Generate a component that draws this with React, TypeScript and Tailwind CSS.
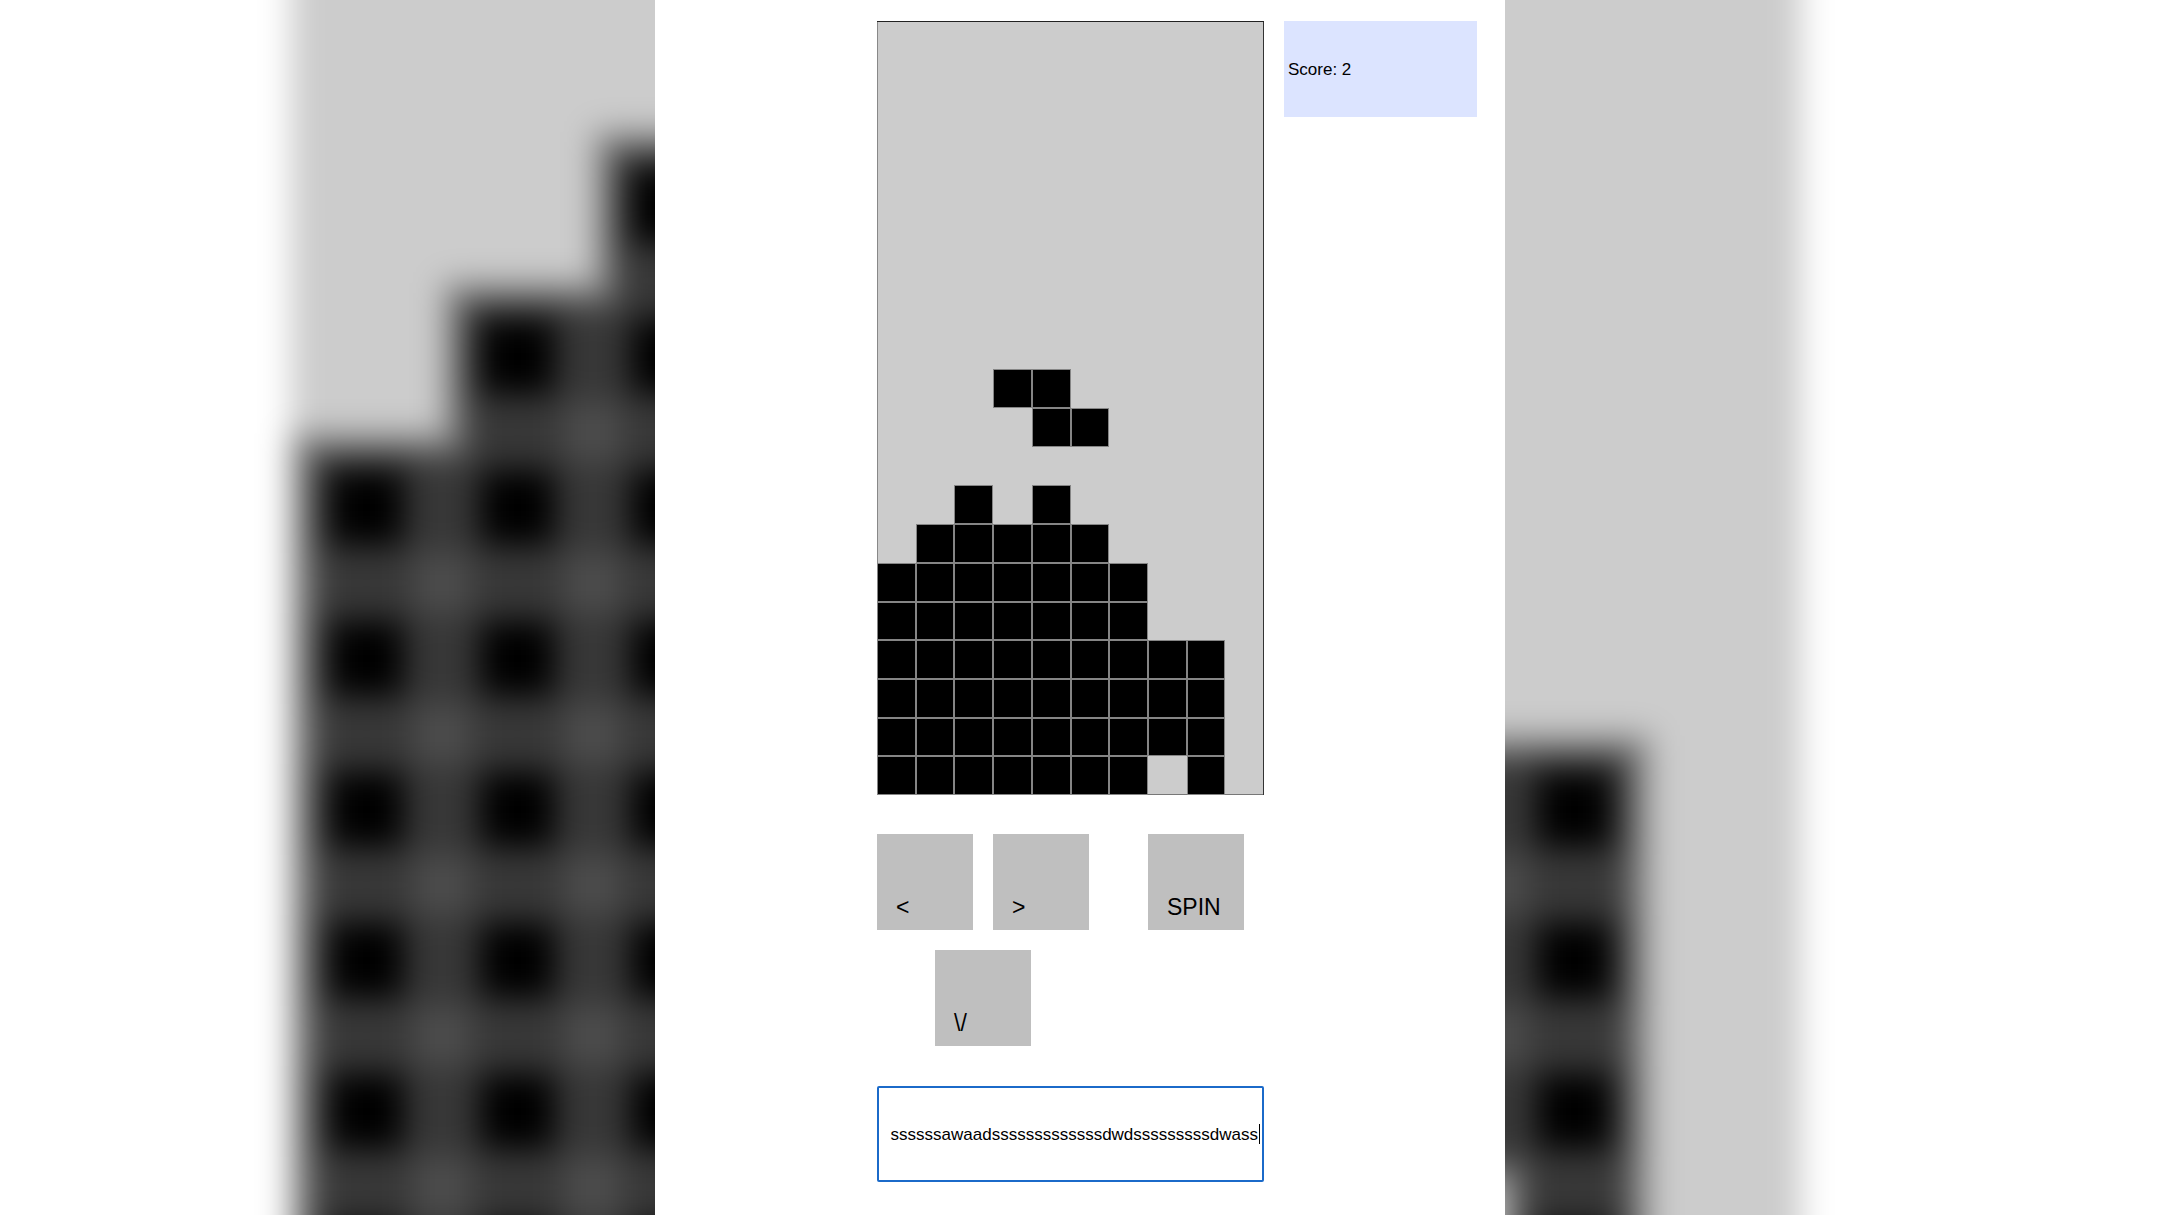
import { useState } from "react";

// "#" is a filled cell
const BOARD = [
  "..........",
  "..........",
  "..........",
  "..........",
  "..........",
  "..........",
  "..........",
  "..........",
  "..........",
  "...##.....",
  "....##....",
  "..........",
  "..#.#.....",
  ".#####....",
  "#######...",
  "#######...",
  "#########.",
  "#########.",
  "#########.",
  "#######.#.",
];

const CELLS = BOARD.flatMap((row, y) =>
  row.split("").map((cell, x) => ({ x, y, filled: cell === "#" }))
);
const FILLED = CELLS.filter((c) => c.filled);
const EMPTY = CELLS.filter((c) => !c.filled);

const BUTTON =
  "flex h-24 w-24 items-end bg-[#bfbfbf] pb-[11px] pl-[19px] text-[23px] leading-6 text-black";

// Enlarged, blurred copy of the board behind the game
function Backdrop() {
  return (
    <svg
      className="absolute inset-0 h-full w-full"
      viewBox="0 0 2160 1215"
      preserveAspectRatio="xMidYMid slice"
      aria-hidden="true"
    >
      <defs>
        <filter id="soft" filterUnits="userSpaceOnUse" x="0" y="-200" width="2160" height="1600">
          <feGaussianBlur stdDeviation="16" colorInterpolationFilters="sRGB" />
        </filter>
      </defs>
      <g filter="url(#soft)">
        <g transform="translate(291 -1682) scale(151)">
          {FILLED.map(({ x, y }) => (
            <g key={`${x}-${y}`}>
              <rect x={x} y={y} width="1" height="1" fill="#4c4c4c" />
              <rect x={x + 0.2} y={y} width="0.6" height="1" fill="#373737" />
              <rect x={x} y={y + 0.2} width="1" height="0.6" fill="#373737" />
              <rect x={x + 0.25} y={y + 0.25} width="0.5" height="0.5" fill="#000" />
            </g>
          ))}
          {/* lighter rim where the stack meets free space */}
          {EMPTY.map(({ x, y }) => (
            <rect key={`${x}-${y}`} x={x - 0.13} y={y - 0.13} width="1.26" height="1.26" fill="#858585" />
          ))}
          <rect y="14" width="0.13" height="6" fill="#808080" />
          {EMPTY.map(({ x, y }) => (
            <rect key={`${x}-${y}`} x={x} y={y} width="1.01" height="1.01" fill="#ccc" />
          ))}
          <rect x="-2" width="2" height="20" fill="#fff" />
          <rect x="10" width="2" height="20" fill="#fff" />
        </g>
      </g>
    </svg>
  );
}

function Board() {
  return (
    <div className="grid aspect-[1/2] w-full grid-cols-10 grid-rows-20 bg-[#ccc] shadow-[inset_0_1px_#222,inset_-1px_0_#333,inset_1px_0_#888,inset_0_-1px_#777]">
      {CELLS.map(({ x, y, filled }) => (
        <div
          key={`${x}-${y}`}
          className={filled ? "border border-[#858585] bg-black" : ""}
        />
      ))}
    </div>
  );
}

export default function App() {
  const [keys, setKeys] = useState("ssssssawaadsssssssssssssdwdsssssssssdwass");

  return (
    <div className="relative min-h-screen overflow-hidden bg-white font-['Liberation_Sans',Arial,sans-serif]">
      <Backdrop />
      <main className="relative mx-auto flex min-h-screen w-[850px] max-w-full items-start gap-5 bg-white pt-[21px] pl-[222px]">
        <div className="w-[387px] shrink-0">
          <Board />

          <div className="mt-[39px] flex">
            <button className={BUTTON}>&lt;</button>
            <button className={`${BUTTON} ml-5`}>&gt;</button>
            <button className={`${BUTTON} ml-[59px]`}>SPIN</button>
          </div>
          <div className="mt-5 flex pl-[58px]">
            <button className={BUTTON}>\/</button>
          </div>

          <div className="relative mt-10">
            <input
              type="text"
              aria-label="Keys"
              autoFocus
              value={keys}
              onChange={(e) => setKeys(e.target.value)}
              className="block h-24 w-full rounded-xs border-2 border-[#1b6ac9] bg-white px-1 pt-0.5 text-right text-[17px] text-black caret-transparent outline-none"
            />
            <span className="absolute top-[38px] right-1 h-5 w-px bg-black" />
          </div>
        </div>

        <div className="flex h-24 w-[193px] items-center bg-[#dce4ff] pt-0.5 pl-1 text-[17px] text-black">
          Score: 2
        </div>
      </main>
    </div>
  );
}
